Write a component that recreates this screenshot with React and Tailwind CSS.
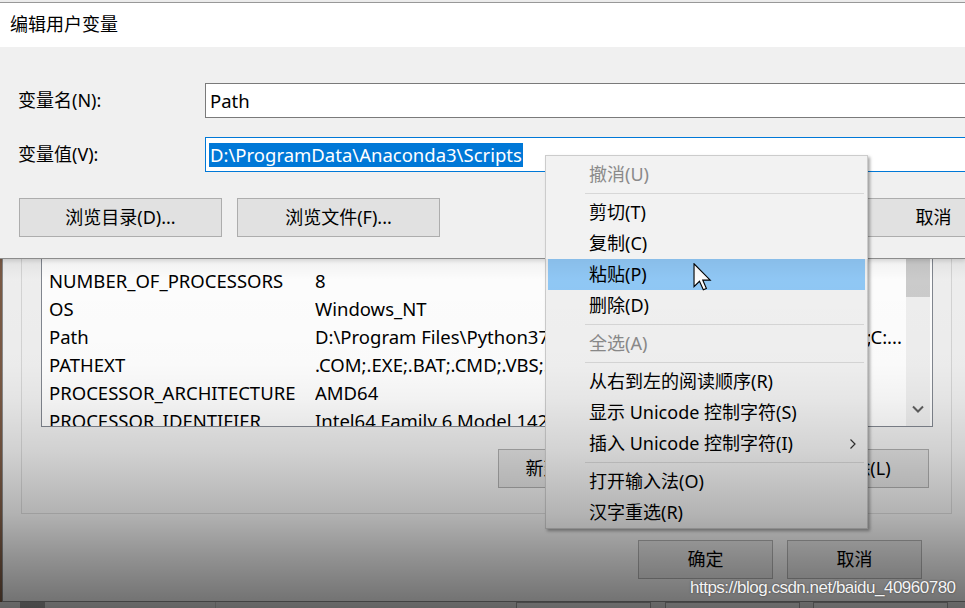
import React from "react";

const rows = [
  ["NUMBER_OF_PROCESSORS", "8"],
  ["OS", "Windows_NT"],
  ["Path", "D:\\Program Files\\Python37\\Scripts\\;D:\\Program Files\\Python37\\;", "C:..."],
  ["PATHEXT", ".COM;.EXE;.BAT;.CMD;.VBS;.VBE;.JS;.JSE;.WSF;.WSH;.MSC"],
  ["PROCESSOR_ARCHITECTURE", "AMD64"],
  ["PROCESSOR_IDENTIFIER", "Intel64 Family 6 Model 142 Stepping 10, GenuineIntel"],
];

function Btn({ className = "", children }) {
  return (
    <div
      className={
        "shrink-0 flex items-center justify-center bg-[#e1e1e1] border border-[#adadad] " +
        className
      }
    >
      {children}
    </div>
  );
}

function Item({ children, disabled, active, arrow }) {
  return (
    <div
      className={
        "relative mx-[2px] h-[31px] pl-[41px] flex items-center whitespace-nowrap " +
        (active ? "bg-[#91c9f7] " : "") +
        (disabled ? "text-[#8a8a8a]" : "text-black")
      }
    >
      {children}
      {arrow && (
        <svg
          className="absolute left-[301px] top-[10px]"
          width="8"
          height="12"
          viewBox="0 0 8 12"
        >
          <path d="M1.5 1.5 L6 6 L1.5 10.5" fill="none" stroke="#333" strokeWidth="1.2" />
        </svg>
      )}
    </div>
  );
}

function Sep() {
  return <div className="h-px bg-[#d7d7d7] mt-[3px] mb-[3px] ml-[39px] mr-[3px]" />;
}

export default function App() {
  return (
    <div className="relative w-[965px] h-[608px] overflow-hidden bg-[#7a5a45] font-['Noto_Sans','Noto_Sans_CJK_SC',sans-serif] text-[18px] text-black flex flex-col">
      {/* strip of underlying window */}
      <div className="h-[3px] shrink-0 bg-[#ececec] border-b border-[#9a9a9a]" />

      {/* edit user variable dialog */}
      <div className="h-[256px] shrink-0 flex flex-col border-b border-[#8c8c8c] relative z-10 shadow-[0_2px_4px_rgba(0,0,0,0.12)]">
        <div className="h-[44px] shrink-0 bg-white flex items-center pl-[10px] pb-[2px]">
          编辑用户变量
        </div>
        <div className="flex-1 bg-[#f0f0f0] pt-[36px] overflow-hidden">
          <div className="flex items-center h-[35px]">
            <div className="w-[205px] pl-[18px] shrink-0">变量名(N):</div>
            <div className="w-[800px] h-[35px] shrink-0 bg-white border border-[#7a7a7a] pl-[4px] flex items-center text-[18.5px]">
              Path
            </div>
          </div>
          <div className="flex items-center h-[35px] mt-[19px]">
            <div className="w-[205px] pl-[18px] shrink-0">变量值(V):</div>
            <div className="w-[800px] h-[35px] shrink-0 bg-white border border-[#0078d7] pl-[3px] flex items-center">
              <span className="bg-[#0078d7] text-white leading-[24px] px-px text-[18.5px]">
                D:\ProgramData\Anaconda3\Scripts
              </span>
            </div>
          </div>
          <div className="flex mt-[26px] pl-[19px]">
            <Btn className="w-[203px] h-[39px]">浏览目录(D)...</Btn>
            <Btn className="w-[203px] h-[39px] ml-[15px]">浏览文件(F)...</Btn>
            <Btn className="w-[203px] h-[39px] ml-[392px]">取消</Btn>
          </div>
        </div>
      </div>

      {/* environment variables dialog (background) */}
      <div className="h-[343px] shrink-0 ml-[2px] bg-[#f0f0f0] border-l border-b border-[#8a8a8a] flex flex-col overflow-hidden">
        <div className="ml-[18px] w-[931px] h-[255px] shrink-0 border-l border-r border-b border-[#d5d5d5] flex flex-col">
          <div className="ml-[19px] w-[892px] h-[168px] shrink-0 bg-white border-l border-r border-b border-[#828790] flex overflow-hidden">
            <div className="flex-1 overflow-hidden pt-[8px] text-[18.5px]">
              {rows.map(([k, v, tail]) => (
                <div key={k} className="h-[28px] flex items-center whitespace-nowrap">
                  <div className="w-[273px] pl-[7px] shrink-0">{k}</div>
                  <div className="flex-1 flex overflow-hidden pr-[4px]">
                    <span className="flex-1 overflow-hidden">{v}</span>
                    {tail && <span className="shrink-0">{tail}</span>}
                  </div>
                </div>
              ))}
            </div>
            <div className="w-[24px] shrink-0 mr-[2px] bg-[#f0f0f0] flex flex-col">
              <div className="h-[38px] bg-[#cdcdcd]" />
              <div className="flex-1" />
              <div className="h-[24px] flex items-start justify-center pt-[3px]">
                <svg width="12" height="8" viewBox="0 0 12 8">
                  <path d="M1 1.5 L6 6.5 L11 1.5" fill="none" stroke="#606060" strokeWidth="2" />
                </svg>
              </div>
            </div>
          </div>
          <div className="flex mt-[22px] ml-[476px]">
            <Btn className="w-[133px] h-[39px]">新建(W)...</Btn>
            <Btn className="w-[133px] h-[39px] ml-[16px]">编辑(I)...</Btn>
            <Btn className="w-[133px] h-[39px] ml-[16px]">删除(L)</Btn>
          </div>
        </div>
        <div className="flex mt-[26px] ml-[635px]">
          <Btn className="w-[135px] h-[39px]">确定</Btn>
          <Btn className="w-[135px] h-[39px] ml-[14px]">取消</Btn>
        </div>
      </div>

      {/* bottom strip of system properties window */}
      <div className="h-[6px] shrink-0 bg-[#d8d8d8] flex">
        <div className="w-[25px] ml-[20px] bg-[#9a9a9a]" />
        <div className="w-px ml-[170px] bg-[#bdbdbd]" />
        <div className="w-[135px] ml-[300px] border border-b-0 border-[#9a9a9a] bg-[#e1e1e1]" />
        <div className="w-[135px] ml-[14px] border border-b-0 border-[#9a9a9a] bg-[#e1e1e1]" />
        <div className="w-[135px] ml-[13px] border border-b-0 border-[#9a9a9a] bg-[#e1e1e1]" />
      </div>

      {/* context menu */}
      <div className="absolute left-[545px] top-[155px] w-[323px] h-[374px] bg-[#f2f2f2] border border-[#cccccc] shadow-[2px_2px_3px_rgba(0,0,0,0.35)] pt-[3px] z-20">
        <Item disabled>撤消(U)</Item>
        <Sep />
        <Item>剪切(T)</Item>
        <Item>复制(C)</Item>
        <Item active>粘贴(P)</Item>
        <Item>删除(D)</Item>
        <Sep />
        <Item disabled>全选(A)</Item>
        <Sep />
        <Item>从右到左的阅读顺序(R)</Item>
        <Item>显示 Unicode 控制字符(S)</Item>
        <Item arrow>插入 Unicode 控制字符(I)</Item>
        <Sep />
        <Item>打开输入法(O)</Item>
        <Item>汉字重选(R)</Item>
      </div>

      {/* mouse cursor */}
      <svg
        className="absolute left-[693px] top-[263px] z-30"
        width="19"
        height="28"
        viewBox="0 0 12.5 19"
      >
        <path
          d="M0.5 0.5 L0.5 16 L4.2 12.4 L6.8 18.2 L8.9 17.3 L6.4 11.6 L11.5 11.6 Z"
          fill="white"
          stroke="black"
          strokeWidth="0.75"
          strokeLinejoin="miter"
        />
      </svg>

      {/* dimming gradient */}
      <div className="absolute left-0 right-0 top-[259px] bottom-0 z-40 pointer-events-none bg-[linear-gradient(to_bottom,rgba(0,0,0,0.06)_0%,rgba(0,0,0,0.01)_6%,rgba(0,0,0,0.02)_30%,rgba(0,0,0,0.05)_40%,rgba(0,0,0,0.13)_55%,rgba(0,0,0,0.26)_73%,rgba(0,0,0,0.4)_86%,rgba(0,0,0,0.54)_100%)]" />

      {/* watermark */}
      <div className="absolute left-[690px] top-[576px] z-50 text-[17px] leading-[24px] tracking-[-0.5px] text-[#f4f4f4] font-['Liberation_Sans',sans-serif] [text-shadow:0_0_2px_rgba(0,0,0,0.55)]">
        https://blog.csdn.net/baidu_40960780
      </div>
    </div>
  );
}
